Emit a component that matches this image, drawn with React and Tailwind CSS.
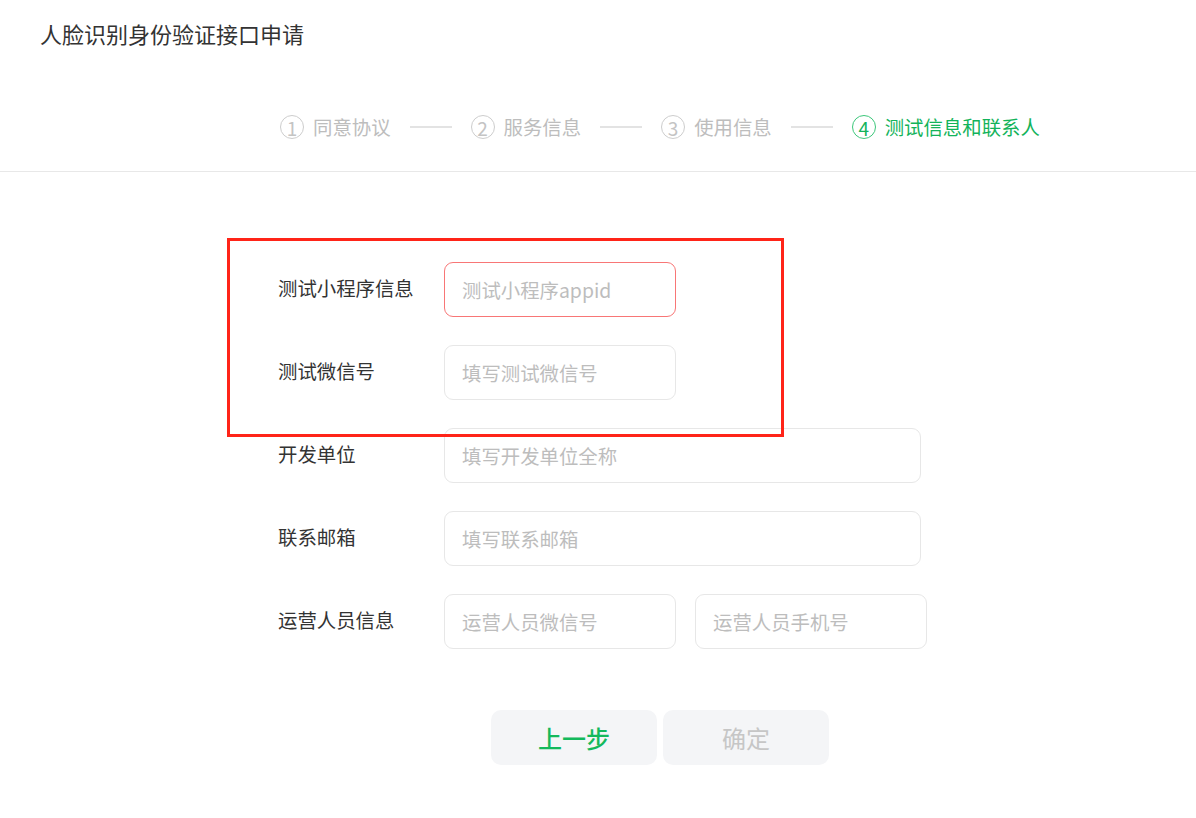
import { useState } from 'react';

const STEPS = [
  { n: '1', label: '同意协议' },
  { n: '2', label: '服务信息' },
  { n: '3', label: '使用信息' },
  { n: '4', label: '测试信息和联系人' },
];

const CURRENT = 3;

function Step({ n, label, active }) {
  const tone = active ? 'text-[#12b35a] border-[#3cc77a]' : 'text-[#c4c4c4] border-[#cdcdcd]';
  return (
    <div className={`flex items-center gap-[9px] ${active ? 'text-[#12b35a]' : 'text-[#bdbdbd]'}`}>
      <span className={`flex h-[24px] w-[24px] items-center justify-center rounded-full border-[1.5px] text-[19px] leading-none ${tone}`}>
        {n}
      </span>
      <span className="text-[19.4px] leading-none">{label}</span>
    </div>
  );
}

function Field({ placeholder, wide, error }) {
  return (
    <input
      placeholder={placeholder}
      className={`h-[55px] rounded-[9px] border bg-white px-[17px] text-[19.4px] text-[#333] outline-none placeholder:text-[#bdbdbd] ${
        wide ? 'w-[477px]' : 'w-[232px]'
      } ${error ? 'border-[#f87676]' : 'border-[#e7e7e7]'}`}
    />
  );
}

function Row({ label, children }) {
  return (
    <div className="flex items-center">
      <label className="w-[166px] pb-[4px] text-[19.4px] text-[#333]">{label}</label>
      <div className="flex gap-[19px]">{children}</div>
    </div>
  );
}

export default function App() {
  const [step] = useState(CURRENT);

  return (
    <div
      className="relative min-h-[818px] bg-white"
      style={{ fontFamily: '"Noto Sans CJK SC", "Noto Sans", sans-serif' }}
    >
      {/* Header */}
      <div className="border-b border-[#e8e8e8]">
        <h1 className="pl-[40px] pt-[17px] text-[22px] leading-[32px] text-[#333]">人脸识别身份验证接口申请</h1>
        <div className="flex items-center pb-[32px] pl-[280px] pt-[66px]">
          {STEPS.map((s, i) => (
            <div key={s.n} className="flex items-center">
              {i > 0 && <span className="mx-[19px] h-[2px] w-[42px] bg-[#e3e3e3]" />}
              <Step n={s.n} label={s.label} active={i === step} />
            </div>
          ))}
        </div>
      </div>

      {/* Form */}
      <form className="flex flex-col gap-[28px] pl-[278px] pt-[90px]">
        <Row label="测试小程序信息">
          <Field placeholder="测试小程序appid" error />
        </Row>
        <Row label="测试微信号">
          <Field placeholder="填写测试微信号" />
        </Row>
        <Row label="开发单位">
          <Field placeholder="填写开发单位全称" wide />
        </Row>
        <Row label="联系邮箱">
          <Field placeholder="填写联系邮箱" wide />
        </Row>
        <Row label="运营人员信息">
          <Field placeholder="运营人员微信号" />
          <Field placeholder="运营人员手机号" />
        </Row>
      </form>

      <div className="flex gap-[6px] pl-[491px] pt-[61px]">
        <button type="button" className="h-[55px] w-[166px] rounded-[10px] bg-[#f4f5f7] text-[24px] font-medium text-[#13b95c]">
          上一步
        </button>
        <button type="button" disabled className="h-[55px] w-[166px] rounded-[10px] bg-[#f4f5f7] text-[24px] text-[#c6c6c6]">
          确定
        </button>
      </div>

      {/* annotation box */}
      <div className="pointer-events-none absolute left-[227px] top-[238px] h-[199px] w-[557px] border-[3px] border-[#ff2418]" />
    </div>
  );
}
